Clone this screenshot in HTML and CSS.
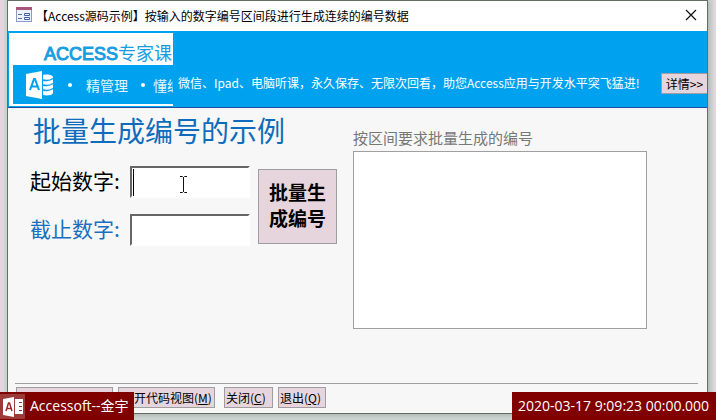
FILE: index.html
```html
<!DOCTYPE html>
<html lang="zh-CN">
<head>
    <meta charset="UTF-8">
    <meta name="viewport" content="width=device-width, initial-scale=1.0">
    <title>批量生成编号的示例</title>
    <link rel="stylesheet" href="styles.css">
</head>
<body>
    <div class="window">
        <header class="titlebar">
            <svg class="form-icon" width="16" height="16" viewBox="0 0 16 16">
                <rect x="0.5" y="0.5" width="15" height="14" fill="#eef2fa" stroke="#8d9cc4"/>
                <rect x="0" y="0" width="16" height="3" fill="#a8567a"/>
                <path d="M2 7.5h4M2 11.5h4" stroke="#5b6b9c"/>
                <path d="M8.5 6.5h5v2h-5zM8.5 10.5h5v2h-5z" fill="none" stroke="#4560a5"/>
            </svg>
            <span class="title">【Access源码示例】按输入的数字编号区间段进行生成连续的编号数据</span>
            <button class="close" aria-label="关闭窗口">
                <svg width="12" height="12" viewBox="0 0 12 12"><path d="M1 1l10 10M11 1L1 11" stroke="#111" stroke-width="1.2"/></svg>
            </button>
        </header>

        <div class="banner">
            <div class="logo">
                <div class="logo-top"><b>ACCESS</b>专家课</div>
                <div class="logo-bottom">
                    <svg width="30" height="28" viewBox="0 0 30 28">
                        <path d="M1 3L17 0v28L1 25z" fill="#fff"/>
                        <path d="M5 19L9 8h1l4 11M6.500 15.500h6" fill="none" stroke="#00a2f0" stroke-width="2"/>
                        <path d="M18 4c5-1 10 0 10 2.500v15c0 2.500-5 3.500-10 2.500z" fill="#fff"/>
                        <path d="M18 9c4 1 8 0 10-1.500M18 14c4 1 8 0 10-1.500M18 19c4 1 8 0 10-1.500" fill="none" stroke="#00a2f0" stroke-width="1.500"/>
                    </svg>
                    <ul>
                        <li>精管理</li>
                        <li>懂编</li>
                    </ul>
                </div>
            </div>
            <p class="slogan">微信、Ipad、电脑听课，永久保存、无限次回看，助您Access应用与开发水平突飞猛进!</p>
            <button class="btn more">详情&gt;&gt;</button>
        </div>

        <main class="content">
            <section class="entry">
                <h1>批量生成编号的示例</h1>
                <form class="range">
                    <div class="fields">
                        <label for="start">起始数字:</label>
                        <div class="field">
                            <input id="start" type="text">
                            <span class="caret"></span>
                            <svg class="pointer" width="9" height="17" viewBox="0 0 9 17"><path d="M1 .5h2.500l1 1 1-1H8M4.500 1v15M1 16.500h2.500l1-1 1 1H8" fill="none" stroke="#111"/></svg>
                        </div>
                        <label class="blue" for="end">截止数字:</label>
                        <div class="field">
                            <input id="end" type="text">
                        </div>
                    </div>
                    <button class="btn generate" type="button">批量生<br>成编号</button>
                </form>
            </section>
            <section class="result">
                <label for="numbers">按区间要求批量生成的编号</label>
                <select id="numbers" size="8"></select>
            </section>
        </main>

        <footer class="actions">
            <button class="btn wide" aria-label="打开窗体"></button>
            <button class="btn wide">打开代码视图(<u>M</u>)</button>
            <button class="btn close-form">关闭(<u>C</u>)</button>
            <button class="btn quit">退出(<u>Q</u>)</button>
        </footer>
    </div>

    <div class="tag tag-left">
        <svg width="25" height="25" viewBox="0 0 25 25">
            <rect width="25" height="25" fill="#9c3a3a"/>
            <path d="M3 5l11-2v20L3 21z" fill="#fff"/>
            <path d="M6 17l2.500-8h1L12 17M7 14.500h4" fill="none" stroke="#9c2a2a" stroke-width="1.500"/>
            <path d="M15 5h8v15h-8z" fill="#fff"/>
            <path d="M19 8.500h3M19 12.500h3M19 16.500h3" stroke="#9c2a2a"/>
        </svg>
        <span>Accessoft--金宇</span>
    </div>
    <div class="tag tag-right">2020-03-17 9:09:23 00:00.000</div>
</body>
</html>
```
FILE: styles.css
```css
* { box-sizing: border-box; }
body { margin: 0; padding: 0 8px 6px 7px; height: 100vh; display: flex; overflow: hidden; font-family: "Noto Sans CJK SC", sans-serif; font-size: 12px; color: #000; background: linear-gradient(to right, #e6d5dd 4px, #ccd4d2 4px, #ccd4d2 calc(100% - 3px), #e0d3d9 calc(100% - 3px)); }
button, input, select { font-family: inherit; font-size: inherit; color: inherit; }
.window { flex: 1; min-width: 0; display: flex; flex-direction: column; background: #f7f7f7; border: 1px solid #617161; box-shadow: 2px 2px 3px #b4b9b8; }

.titlebar { display: flex; align-items: center; height: 30px; flex-shrink: 0; padding: 0 8px 2px; background: #fff; }
.title { flex: 1; margin-left: 4px; white-space: nowrap; }
.close { display: flex; padding: 2px; border: none; background: none; }

.banner { display: flex; height: 77px; flex-shrink: 0; background: #00a2f0; border-bottom: 1px solid #1c50a0; }
.logo { width: 164px; height: 73px; margin: 2px 0 0 1px; padding: 0 0 2px 4px; overflow: hidden; flex-shrink: 0; background: #fff; white-space: nowrap; }
.logo-top { height: 32px; padding-left: 31px; line-height: 38px; font-size: 18px; color: #189ee0; }
.logo-top b { font-family: "Liberation Sans", sans-serif; font-weight: normal; -webkit-text-stroke: 1px #189ee0; }
.logo-bottom { display: flex; align-items: center; height: 39px; padding-left: 12px; background: #00a2f0; color: #e4f5fd; overflow: hidden; }
.logo-bottom svg { flex-shrink: 0; }
.logo-bottom ul { display: flex; margin: 0; padding: 0; list-style: none; font-size: 14px; }
.logo-bottom li { display: flex; align-items: center; margin-left: 13px; }
.logo-bottom li::before { content: ""; width: 4px; height: 4px; margin-right: 14px; border-radius: 50%; background: #fff; }
.logo-bottom li + li::before { margin-right: 8px; }
.slogan { flex: 1; margin: 44px 0 0 5px; line-height: 16px; color: #fff; white-space: nowrap; }

.btn { height: 21px; padding: 0 3px; border: 1px solid #a09da2; background: #e6d5dd; line-height: 16px; white-space: nowrap; }
.more { width: 46px; margin-top: 42px; border-right: none; }

.content { flex: 1; display: flex; padding: 0 22px; }
.entry { width: 323px; flex-shrink: 0; }
h1 { margin: 4px 0 0 3px; font-family: STXingkai, KaiTi, "Noto Sans CJK SC", sans-serif; font-size: 28px; line-height: 36px; font-weight: normal; color: #0f6cbd; }
.range { display: flex; gap: 8px; margin: 18px 0 0; }
.fields { display: grid; grid-template-columns: 100px 120px; row-gap: 16px; align-items: center; font-size: 21px; line-height: 26px; }
.fields label { padding-bottom: 4px; }
.fields .blue { color: #1a6fbf; }
.field { position: relative; }
.field input { display: block; width: 100%; height: 32px; padding: 0 4px; background: #fff; border: 2px solid; border-color: #666 #fff #fff #666; outline: none; font-size: 20px; }
.caret { position: absolute; left: 3px; top: 3px; width: 1px; height: 27px; background: #000; }
.pointer { position: absolute; left: 49px; top: 10px; }
.generate { width: 79px; height: 75px; margin-top: 3px; padding-bottom: 4px; font-size: 19px; line-height: 26px; font-weight: bold; }
.result { flex: 1; max-width: 294px; padding-top: 20px; }
.result label { display: block; height: 23px; line-height: 20px; font-size: 15px; color: #777; }
.result select { display: block; width: 100%; height: 178px; border: 1px solid #a0a0a0; border-radius: 0; background: #fff; outline: none; }

.actions { display: flex; align-items: flex-start; gap: 5px; height: 30px; margin: 0 9px 0 7px; padding: 3px 1px 0; border-top: 1px solid #a0a0a0; flex-shrink: 0; }
.wide { width: 97px; }
.close-form { width: 49px; margin-left: 4px; }
.quit { width: 48px; }
.close-form, .quit { padding: 0 1px; text-align: left; }

.tag { position: absolute; bottom: 0; height: 28px; display: flex; align-items: center; background: #800000; color: #fff; font-family: "Open Sans", "Noto Sans CJK SC", sans-serif; font-size: 14px; line-height: 20px; white-space: nowrap; }
.tag-left { left: 0; width: 134px; gap: 5px; }
.tag-right { right: 0; width: 204px; padding-left: 6px; }
```
